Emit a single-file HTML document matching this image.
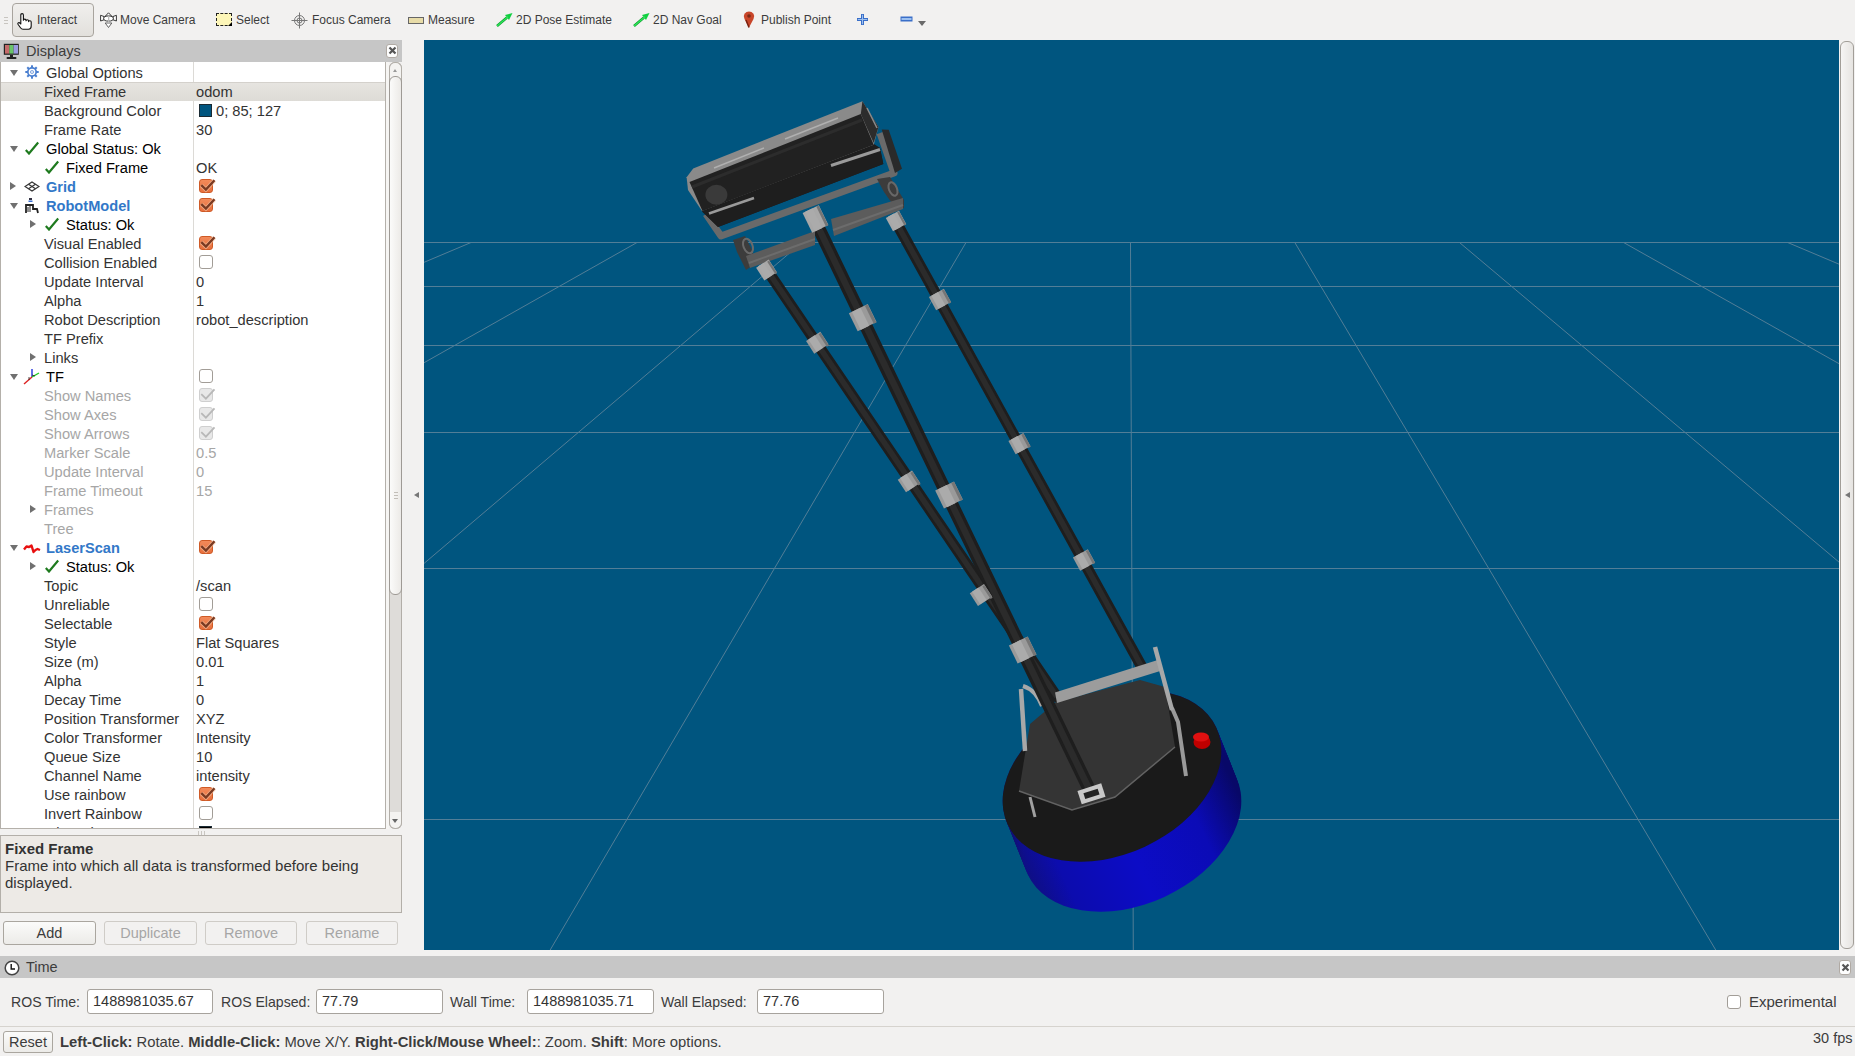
<!DOCTYPE html>
<html><head><meta charset="utf-8">
<style>
*{margin:0;padding:0;box-sizing:border-box}
html,body{width:1855px;height:1056px;overflow:hidden;background:#f2f1f0;font-family:"Liberation Sans",sans-serif;color:#3c3c3c}
.abs{position:absolute}
#tb{position:absolute;left:0;top:0;width:1855px;height:40px;background:#f2f1f0}
.tbt{position:absolute;top:12px;font-size:12px;line-height:16px;color:#3c3c3c;white-space:nowrap}
.tbi{position:absolute}
#interact{position:absolute;left:12px;top:3px;width:82px;height:34px;border:1px solid #a8a49e;border-radius:4px;background:linear-gradient(#f0efed,#e2e0dc)}
.hdr{position:absolute;background:#c6c6c6}
.hdrt{position:absolute;font-size:14.5px;line-height:18px;color:#3c3c3c}
.closebtn{position:absolute;width:12px;height:14px;border:1px solid #b0aaa4;border-radius:3px;background:#fdfdfd}
#tree{position:absolute;left:0;top:62px;width:386px;height:767px;background:#fff;overflow:hidden}
#treeb{position:absolute;left:0;top:62px;width:386px;height:767px;border:1px solid #b4b0aa;border-top:none}
#coldiv{position:absolute;left:193px;top:0;width:1px;height:767px;background:#dcdad6}
.row{position:absolute;left:0;width:385px;height:19px}
.row.sel{background:linear-gradient(#e6e4e0,#dddbd6);border-top:1px solid #d4d1cc}
.lbl{position:absolute;top:1px;font-size:14.67px;line-height:19px;white-space:nowrap}
.row.sel .lbl,.row.sel .val{top:0px}
.tn{color:#333}
.ts{color:#000}
.tb{color:#3278c8;font-weight:bold;font-size:14.6px}
.td{color:#a6a6a6}
.val{position:absolute;left:196px;top:1px;font-size:14.67px;line-height:19px;white-space:nowrap;color:#333}
.val.td{color:#a6a6a6}
.ic{position:absolute}
.tri{position:absolute;width:0;height:0}
.tri.down{top:7px;border-left:4px solid transparent;border-right:4px solid transparent;border-top:6px solid #707070}
.tri.right{top:5px;border-top:4px solid transparent;border-bottom:4px solid transparent;border-left:6px solid #707070}
.cb{position:absolute;left:199px;top:2px;width:14px;height:14px;border-radius:3px}
.cb svg{position:absolute;left:-1px;top:-3px}
.cb.on{background:linear-gradient(#f28a5a,#e8703e);border:1px solid #cf5a26}
.cb.off{background:#fff;border:1px solid #a29d97}
.cb.dis{background:#e8e8e8;border:1px solid #cfcfcf}
.sw{position:absolute;left:199px;top:3px;width:13px;height:13px;background:#00557f;border:1px solid #1a2a33}
.sw.blk{background:#000}
.btn{position:absolute;top:921px;height:24px;border:1px solid #aaa69f;border-radius:3px;background:linear-gradient(#fbfbfa,#ecebe8);font-size:14.5px;line-height:22px;text-align:center}
.btn.dis{color:#a6a6a6;border-color:#cfccc7;background:#f2f1f0}
.inp{position:absolute;top:989px;height:25px;background:#fff;border:1px solid #a7a39d;border-radius:3px;font-size:14.5px;line-height:23px;padding-left:5px;color:#333}
.tlab{position:absolute;top:993px;font-size:14.1px;line-height:18px;color:#3c3c3c;white-space:nowrap}
#status{position:absolute;left:60px;top:1033px;font-size:14.8px;line-height:18px;color:#3c3c3c;white-space:nowrap}
#status b{color:#3c3c3c}
</style></head><body>
<!-- toolbar -->
<div id="tb">
 <div class="abs" style="left:4px;top:17px;width:4px;height:1px;background:#c8c5c0"></div>
 <div class="abs" style="left:4px;top:20px;width:4px;height:1px;background:#c8c5c0"></div>
 <div class="abs" style="left:4px;top:23px;width:4px;height:1px;background:#c8c5c0"></div>
 <div id="interact"></div>
 <svg class="tbi" style="left:17px;top:13px" width="16" height="17" viewBox="0 0 16 17"><path d="M3.8,11 L3.8,2 Q3.8,0.6 5.1,0.6 Q6.4,0.6 6.4,2 L6.4,7.2 Q6.4,6.1 7.7,6.1 Q9,6.1 9,7.3 L9,7.8 Q9,6.8 10.3,6.8 Q11.6,6.8 11.6,8 L11.6,8.6 Q11.6,7.7 12.9,7.7 Q14.2,7.7 14.2,9 L14.2,13 Q14.2,16.2 11.5,16.2 L6,16.2 Q4.5,16.2 3.5,14.8 L1,11.2 Q0.5,10.2 1.4,9.8 Q2.4,9.4 3,10.3 Z" fill="#fff" stroke="#111" stroke-width="1.1" stroke-linejoin="round"/></svg>
 <div class="tbt" style="left:37px">Interact</div>
 <svg class="tbi" style="left:99.5px;top:12px" width="17" height="17" viewBox="0 0 17 17"><g fill="#fff" stroke="#222" stroke-width="0.9" stroke-linejoin="round"><path d="M8.5 0.8 L12 4.5 L5 4.5 Z"/><path d="M0.6 3.3 L4 4.5 L4 7.8 L0.6 9 Z"/><path d="M16.4 3.3 L13 4.5 L13 7.8 L16.4 9 Z"/><ellipse cx="8.5" cy="6.5" rx="4.8" ry="2.6"/><path d="M5.2 11 L11.8 11 L8.5 15.5 Z" stroke="#555"/></g><rect x="8" y="4" width="1.3" height="7" fill="#bbb"/></svg>
 <div class="tbt" style="left:120px">Move Camera</div>
 <div class="tbi" style="left:216px;top:13px;width:16px;height:13px;background:#fdf6b8;border:1px dashed #222"></div>
 <div class="tbi" style="left:228px;top:22px;width:0;height:0;border-left:4px solid transparent;border-bottom:4px solid #000"></div>
 <div class="tbt" style="left:236px">Select</div>
 <svg class="tbi" style="left:291px;top:12px" width="17" height="17" viewBox="0 0 17 17"><g fill="none" stroke="#777" stroke-width="1"><circle cx="8.5" cy="8.5" r="5"/><circle cx="8.5" cy="8.5" r="2.5"/><path d="M8.5 0.5 L8.5 16.5 M0.5 8.5 L16.5 8.5"/></g></svg>
 <div class="tbt" style="left:312px">Focus Camera</div>
 <div class="tbi" style="left:408px;top:17px;width:16px;height:7px;background:#e8dca8;border:1px solid #666"></div>
 <div class="tbt" style="left:428px">Measure</div>
 <svg class="tbi" style="left:496px;top:12px" width="17" height="15" viewBox="0 0 17 15"><path d="M1 14 L11 5.5" stroke="#0a9a2a" stroke-width="2.5"/><path d="M16.5 1 L9 3 L13 8 Z" fill="#10d040"/><path d="M1 14 L12 4.8" stroke="#2ee85a" stroke-width="1.2"/></svg>
 <div class="tbt" style="left:516px">2D Pose Estimate</div>
 <svg class="tbi" style="left:633px;top:12px" width="17" height="15" viewBox="0 0 17 15"><path d="M1 14 L11 5.5" stroke="#0a9a2a" stroke-width="2.5"/><path d="M16.5 1 L9 3 L13 8 Z" fill="#10d040"/><path d="M1 14 L12 4.8" stroke="#2ee85a" stroke-width="1.2"/></svg>
 <div class="tbt" style="left:653px">2D Nav Goal</div>
 <svg class="tbi" style="left:743px;top:11px" width="12" height="17" viewBox="0 0 12 17"><path d="M6 16.5 L1.5 8 Q0 5 1.5 2.8 Q3.3 0.5 6 0.5 Q8.7 0.5 10.5 2.8 Q12 5 10.5 8 Z" fill="#c8462a"/><path d="M6 16.5 L3 9" stroke="#7a2210" stroke-width="1.5"/><circle cx="6" cy="5" r="1.8" fill="#7a2a18"/></svg>
 <div class="tbt" style="left:761px">Publish Point</div>
 <svg class="tbi" style="left:856px;top:13px" width="13" height="13" viewBox="0 0 13 13"><path d="M6.5 1 L6.5 12 M1 6.5 L12 6.5" stroke="#3a6fc8" stroke-width="3"/><path d="M6.5 1.8 L6.5 11.2 M1.8 6.5 L11.2 6.5" stroke="#9cc0f0" stroke-width="1"/></svg>
 <svg class="tbi" style="left:900px;top:16px" width="13" height="6" viewBox="0 0 13 6"><rect x="0.5" y="0.5" width="12" height="5" fill="#3a6fc8"/><rect x="1.5" y="2" width="10" height="2" fill="#9cc0f0"/></svg>
 <div class="tbi" style="left:918px;top:21px;width:0;height:0;border-left:4px solid transparent;border-right:4px solid transparent;border-top:5px solid #6a6a6a"></div>
</div>

<!-- displays panel -->
<div class="hdr" style="left:0;top:40px;width:402px;height:22px"></div>
<svg class="abs" style="left:3px;top:43px" width="17" height="17" viewBox="0 0 17 17"><rect x="0.8" y="0.8" width="15" height="11" fill="#222"/><rect x="2" y="2" width="4.3" height="8.6" fill="#c46a6a"/><rect x="6.3" y="2" width="4.3" height="8.6" fill="#6ac46a"/><rect x="10.6" y="2" width="4.4" height="8.6" fill="#9a9ae0"/><rect x="7" y="12" width="3" height="2" fill="#222"/><rect x="3.5" y="14" width="10" height="2" rx="1" fill="#222"/></svg>
<div class="hdrt" style="left:26px;top:42px">Displays</div>
<div class="closebtn" style="left:386px;top:44px"></div>
<svg class="abs" style="left:388px;top:46px" width="9" height="9" viewBox="0 0 9 9"><path d="M1.5 1.5 L7.5 7.5 M7.5 1.5 L1.5 7.5" stroke="#555" stroke-width="2.2"/></svg>

<div id="tree">
 <div id="coldiv"></div>
<div class="row" style="top:1px"><div class="tri down" style="left:10px"></div><svg class="ic" style="left:25px;top:2px" width="14" height="14" viewBox="0 0 14 14"><g fill="#4a7fd0"><circle cx="7" cy="7" r="5"/><rect x="6" y="0.3" width="2" height="13.4"/><rect x="0.3" y="6" width="13.4" height="2"/><rect x="6" y="0.3" width="2" height="13.4" transform="rotate(45 7 7)"/><rect x="6" y="0.3" width="2" height="13.4" transform="rotate(-45 7 7)"/></g><circle cx="7" cy="7" r="3.3" fill="#fff"/><circle cx="7" cy="7" r="1.8" fill="#4a7fd0"/><circle cx="7" cy="7" r="1" fill="#fff"/></svg><span class="lbl tn" style="left:46px">Global Options</span></div>
<div class="row sel" style="top:20px"><span class="lbl tn" style="left:44px">Fixed Frame</span><span class="val">odom</span></div>
<div class="row" style="top:39px"><span class="lbl tn" style="left:44px">Background Color</span><div class="sw"></div><span class="val" style="left:216px">0; 85; 127</span></div>
<div class="row" style="top:58px"><span class="lbl tn" style="left:44px">Frame Rate</span><span class="val">30</span></div>
<div class="row" style="top:77px"><div class="tri down" style="left:10px"></div><svg class="ic" style="left:25px;top:2px" width="14" height="14" viewBox="0 0 14 14"><path d="M0.8 9 L4 12.5 L13.2 1.5" fill="none" stroke="#1e7a1e" stroke-width="2.2"/></svg><span class="lbl ts" style="left:46px">Global Status: Ok</span></div>
<div class="row" style="top:96px"><svg class="ic" style="left:45px;top:2px" width="14" height="14" viewBox="0 0 14 14"><path d="M0.8 9 L4 12.5 L13.2 1.5" fill="none" stroke="#1e7a1e" stroke-width="2.2"/></svg><span class="lbl ts" style="left:66px">Fixed Frame</span><span class="val">OK</span></div>
<div class="row" style="top:115px"><div class="tri right" style="left:10px"></div><svg class="ic" style="left:24px;top:4px" width="16" height="11" viewBox="0 0 16 11"><g fill="none" stroke="#333" stroke-width="1.2"><path d="M8 1 L15 5.5 L8 10 L1 5.5 Z"/><path d="M4.5 3.2 L11.5 7.8 M11.5 3.2 L4.5 7.8"/></g></svg><span class="lbl tb" style="left:46px">Grid</span><div class="cb on"><svg width="18" height="16" viewBox="0 0 18 16"><path d="M2.3 8.2 L6.9 12.6 L15.5 3.3" fill="none" stroke="#f7c4a4" stroke-width="4" opacity="0.7"/><path d="M2.3 8.2 L6.9 12.6 L15.5 3.3" fill="none" stroke="#7a3a22" stroke-width="2.4"/></svg></div></div>
<div class="row" style="top:134px"><div class="tri down" style="left:10px"></div><svg class="ic" style="left:24px;top:1px" width="16" height="17" viewBox="0 0 16 17"><rect x="5" y="1" width="3" height="2" fill="#334"/><rect x="4.5" y="3.5" width="4" height="1.5" fill="#3a6fd0"/><path d="M2 16 L2 8 L9 8 L9 12 L13 12 L14 16" fill="none" stroke="#222" stroke-width="1.8"/><path d="M4 10 L4 15 M6 9 L6 15" stroke="#222" stroke-width="1"/></svg><span class="lbl tb" style="left:46px">RobotModel</span><div class="cb on"><svg width="18" height="16" viewBox="0 0 18 16"><path d="M2.3 8.2 L6.9 12.6 L15.5 3.3" fill="none" stroke="#f7c4a4" stroke-width="4" opacity="0.7"/><path d="M2.3 8.2 L6.9 12.6 L15.5 3.3" fill="none" stroke="#7a3a22" stroke-width="2.4"/></svg></div></div>
<div class="row" style="top:153px"><div class="tri right" style="left:30px"></div><svg class="ic" style="left:45px;top:2px" width="14" height="14" viewBox="0 0 14 14"><path d="M0.8 9 L4 12.5 L13.2 1.5" fill="none" stroke="#1e7a1e" stroke-width="2.2"/></svg><span class="lbl ts" style="left:66px">Status: Ok</span></div>
<div class="row" style="top:172px"><span class="lbl tn" style="left:44px">Visual Enabled</span><div class="cb on"><svg width="18" height="16" viewBox="0 0 18 16"><path d="M2.3 8.2 L6.9 12.6 L15.5 3.3" fill="none" stroke="#f7c4a4" stroke-width="4" opacity="0.7"/><path d="M2.3 8.2 L6.9 12.6 L15.5 3.3" fill="none" stroke="#7a3a22" stroke-width="2.4"/></svg></div></div>
<div class="row" style="top:191px"><span class="lbl tn" style="left:44px">Collision Enabled</span><div class="cb off"></div></div>
<div class="row" style="top:210px"><span class="lbl tn" style="left:44px">Update Interval</span><span class="val">0</span></div>
<div class="row" style="top:229px"><span class="lbl tn" style="left:44px">Alpha</span><span class="val">1</span></div>
<div class="row" style="top:248px"><span class="lbl tn" style="left:44px">Robot Description</span><span class="val">robot_description</span></div>
<div class="row" style="top:267px"><span class="lbl tn" style="left:44px">TF Prefix</span><span class="val"></span></div>
<div class="row" style="top:286px"><div class="tri right" style="left:30px"></div><span class="lbl tn" style="left:44px">Links</span><span class="val"></span></div>
<div class="row" style="top:305px"><div class="tri down" style="left:10px"></div><svg class="ic" style="left:23px;top:1px" width="17" height="17" viewBox="0 0 17 17"><path d="M9 9 L9 1" stroke="#2233dd" stroke-width="1.4"/><path d="M9 9 L16 5" stroke="#22cc22" stroke-width="1.4"/><path d="M9 9 L1 16" stroke="#dd2222" stroke-width="1.4"/><path d="M6 12 L6 9 M9 7 L12 8" stroke="#222" stroke-width="0.8"/></svg><span class="lbl ts" style="left:46px">TF</span><div class="cb off"></div></div>
<div class="row" style="top:324px"><span class="lbl td" style="left:44px">Show Names</span><div class="cb dis"><svg width="18" height="16" viewBox="0 0 18 16"><path d="M2.3 8.2 L6.9 12.6 L15.5 3.3" fill="none" stroke="#b8b8b8" stroke-width="1.8"/></svg></div></div>
<div class="row" style="top:343px"><span class="lbl td" style="left:44px">Show Axes</span><div class="cb dis"><svg width="18" height="16" viewBox="0 0 18 16"><path d="M2.3 8.2 L6.9 12.6 L15.5 3.3" fill="none" stroke="#b8b8b8" stroke-width="1.8"/></svg></div></div>
<div class="row" style="top:362px"><span class="lbl td" style="left:44px">Show Arrows</span><div class="cb dis"><svg width="18" height="16" viewBox="0 0 18 16"><path d="M2.3 8.2 L6.9 12.6 L15.5 3.3" fill="none" stroke="#b8b8b8" stroke-width="1.8"/></svg></div></div>
<div class="row" style="top:381px"><span class="lbl td" style="left:44px">Marker Scale</span><span class="val td">0.5</span></div>
<div class="row" style="top:400px"><span class="lbl td" style="left:44px">Update Interval</span><span class="val td">0</span></div>
<div class="row" style="top:419px"><span class="lbl td" style="left:44px">Frame Timeout</span><span class="val td">15</span></div>
<div class="row" style="top:438px"><div class="tri right" style="left:30px"></div><span class="lbl td" style="left:44px">Frames</span><span class="val td"></span></div>
<div class="row" style="top:457px"><span class="lbl td" style="left:44px">Tree</span><span class="val td"></span></div>
<div class="row" style="top:476px"><div class="tri down" style="left:10px"></div><svg class="ic" style="left:23px;top:3px" width="18" height="14" viewBox="0 0 18 14"><path d="M1 8.5 L3.5 5.5 L6 6 L8.5 4.5 L10.5 11 L12.5 9 L14.5 8 L17 9" fill="none" stroke="#e81010" stroke-width="2.4" stroke-linejoin="round"/></svg><span class="lbl tb" style="left:46px">LaserScan</span><div class="cb on"><svg width="18" height="16" viewBox="0 0 18 16"><path d="M2.3 8.2 L6.9 12.6 L15.5 3.3" fill="none" stroke="#f7c4a4" stroke-width="4" opacity="0.7"/><path d="M2.3 8.2 L6.9 12.6 L15.5 3.3" fill="none" stroke="#7a3a22" stroke-width="2.4"/></svg></div></div>
<div class="row" style="top:495px"><div class="tri right" style="left:30px"></div><svg class="ic" style="left:45px;top:2px" width="14" height="14" viewBox="0 0 14 14"><path d="M0.8 9 L4 12.5 L13.2 1.5" fill="none" stroke="#1e7a1e" stroke-width="2.2"/></svg><span class="lbl ts" style="left:66px">Status: Ok</span></div>
<div class="row" style="top:514px"><span class="lbl tn" style="left:44px">Topic</span><span class="val">/scan</span></div>
<div class="row" style="top:533px"><span class="lbl tn" style="left:44px">Unreliable</span><div class="cb off"></div></div>
<div class="row" style="top:552px"><span class="lbl tn" style="left:44px">Selectable</span><div class="cb on"><svg width="18" height="16" viewBox="0 0 18 16"><path d="M2.3 8.2 L6.9 12.6 L15.5 3.3" fill="none" stroke="#f7c4a4" stroke-width="4" opacity="0.7"/><path d="M2.3 8.2 L6.9 12.6 L15.5 3.3" fill="none" stroke="#7a3a22" stroke-width="2.4"/></svg></div></div>
<div class="row" style="top:571px"><span class="lbl tn" style="left:44px">Style</span><span class="val">Flat Squares</span></div>
<div class="row" style="top:590px"><span class="lbl tn" style="left:44px">Size (m)</span><span class="val">0.01</span></div>
<div class="row" style="top:609px"><span class="lbl tn" style="left:44px">Alpha</span><span class="val">1</span></div>
<div class="row" style="top:628px"><span class="lbl tn" style="left:44px">Decay Time</span><span class="val">0</span></div>
<div class="row" style="top:647px"><span class="lbl tn" style="left:44px">Position Transformer</span><span class="val">XYZ</span></div>
<div class="row" style="top:666px"><span class="lbl tn" style="left:44px">Color Transformer</span><span class="val">Intensity</span></div>
<div class="row" style="top:685px"><span class="lbl tn" style="left:44px">Queue Size</span><span class="val">10</span></div>
<div class="row" style="top:704px"><span class="lbl tn" style="left:44px">Channel Name</span><span class="val">intensity</span></div>
<div class="row" style="top:723px"><span class="lbl tn" style="left:44px">Use rainbow</span><div class="cb on"><svg width="18" height="16" viewBox="0 0 18 16"><path d="M2.3 8.2 L6.9 12.6 L15.5 3.3" fill="none" stroke="#f7c4a4" stroke-width="4" opacity="0.7"/><path d="M2.3 8.2 L6.9 12.6 L15.5 3.3" fill="none" stroke="#7a3a22" stroke-width="2.4"/></svg></div></div>
<div class="row" style="top:742px"><span class="lbl tn" style="left:44px">Invert Rainbow</span><div class="cb off"></div></div>
<div class="row" style="top:761px"><span class="lbl tn" style="left:44px">Min Color</span><div class="sw blk"></div></div>
</div>
<div id="treeb"></div>
<!-- tree scrollbar -->
<div class="abs" style="left:386px;top:62px;width:3px;height:767px;background:#f6f5f3"></div>
<div class="abs" style="left:389px;top:62px;width:13px;height:767px;border:1px solid #b2aea8;border-radius:6px;background:#dedcd9"></div>
<div class="abs" style="left:389px;top:62px;width:13px;height:16px;border:1px solid #b2aea8;border-bottom:none;border-radius:6px 6px 0 0;background:#f4f3f1"></div>
<div class="abs" style="left:393px;top:69px;width:0;height:0;border-left:2.5px solid transparent;border-right:2.5px solid transparent;border-bottom:3px solid #999"></div>
<div class="abs" style="left:389px;top:76px;width:13px;height:519px;border:1px solid #9e9a95;border-radius:6px;background:linear-gradient(90deg,#fbfbfa,#eceae7)"></div>
<div class="abs" style="left:389px;top:812px;width:13px;height:17px;border:1px solid #b2aea8;border-top:none;border-radius:0 0 6px 6px;background:#f4f3f1"></div>
<div class="abs" style="left:392px;top:819px;width:0;height:0;border-left:3.5px solid transparent;border-right:3.5px solid transparent;border-top:4px solid #666"></div>
<div class="abs" style="left:198px;top:831px;width:1px;height:4px;background:#c9c6c1;box-shadow:3px 0 0 #c9c6c1,6px 0 0 #c9c6c1"></div>

<!-- description -->
<div class="abs" style="left:0;top:835px;width:402px;height:78px;background:#edeae6;border:1px solid #b3afa9"></div>
<div class="abs" style="left:5px;top:840px;font-size:15px;line-height:17px;color:#333;width:398px">
<b>Fixed Frame</b><br>Frame into which all data is transformed before being displayed.</div>

<div class="btn" style="left:3px;width:93px">Add</div>
<div class="btn dis" style="left:104px;width:93px">Duplicate</div>
<div class="btn dis" style="left:205px;width:92px">Remove</div>
<div class="btn dis" style="left:306px;width:92px">Rename</div>

<!-- splitter -->
<div class="abs" style="left:403px;top:40px;width:21px;height:910px;background:#f2f1f0"></div>
<div class="abs" style="left:394px;top:492px;width:4px;height:1px;background:#c2beb8;box-shadow:0 3px 0 #c2beb8,0 6px 0 #c2beb8"></div>
<div class="abs" style="left:414px;top:492px;width:0;height:0;border-top:3.5px solid transparent;border-bottom:3.5px solid transparent;border-right:5px solid #777"></div>

<!-- 3D view -->
<svg class="abs" style="left:424px;top:40px" width="1415" height="910" viewBox="424 40 1415 910">
<defs><linearGradient id="blu" x1="1000" y1="0" x2="1242" y2="0" gradientUnits="userSpaceOnUse"><stop offset="0" stop-color="#10106e"/><stop offset="0.2" stop-color="#0c0cae"/><stop offset="0.5" stop-color="#0c0cc6"/><stop offset="0.8" stop-color="#0b0bb6"/><stop offset="1" stop-color="#080868"/></linearGradient></defs>
<rect x="424" y="40" width="1415" height="910" fill="#00557f"/>
<line x1="424" y1="242.5" x2="1839" y2="242.5" stroke="#527e97" stroke-width="1" fill="none"/>
<line x1="424" y1="286.5" x2="1839" y2="286.5" stroke="#527e97" stroke-width="1" fill="none"/>
<line x1="424" y1="345.5" x2="1839" y2="345.5" stroke="#527e97" stroke-width="1" fill="none"/>
<line x1="424" y1="432.5" x2="1839" y2="432.5" stroke="#527e97" stroke-width="1" fill="none"/>
<line x1="424" y1="568.5" x2="1839" y2="568.5" stroke="#527e97" stroke-width="1" fill="none"/>
<line x1="424" y1="819.5" x2="1839" y2="819.5" stroke="#527e97" stroke-width="1" fill="none"/>
<line x1="471" y1="242.5" x2="-6634.0" y2="3242.5" stroke="#527e97" stroke-width="1" fill="none"/>
<line x1="637" y1="242.5" x2="-4676.7" y2="3242.5" stroke="#527e97" stroke-width="1" fill="none"/>
<line x1="802" y1="242.5" x2="-2731.1" y2="3242.5" stroke="#527e97" stroke-width="1" fill="none"/>
<line x1="966" y1="242.5" x2="-797.3" y2="3242.5" stroke="#527e97" stroke-width="1" fill="none"/>
<line x1="1130.5" y1="242.5" x2="1142.4" y2="3242.5" stroke="#527e97" stroke-width="1" fill="none"/>
<line x1="1294.8" y1="242.5" x2="3079.7" y2="3242.5" stroke="#527e97" stroke-width="1" fill="none"/>
<line x1="1459.5" y1="242.5" x2="5021.7" y2="3242.5" stroke="#527e97" stroke-width="1" fill="none"/>
<line x1="1623.6" y1="242.5" x2="6956.7" y2="3242.5" stroke="#527e97" stroke-width="1" fill="none"/>
<line x1="1787.7" y1="242.5" x2="8891.7" y2="3242.5" stroke="#527e97" stroke-width="1" fill="none"/>
<ellipse cx="1112.0" cy="776.0" rx="115" ry="78" transform="rotate(-25 1112.0 776.0)" fill="url(#blu)"/>
<ellipse cx="1113.0" cy="778.5" rx="115" ry="78" transform="rotate(-25 1113.0 778.5)" fill="url(#blu)"/>
<ellipse cx="1114.0" cy="781.0" rx="115" ry="78" transform="rotate(-25 1114.0 781.0)" fill="url(#blu)"/>
<ellipse cx="1115.0" cy="783.5" rx="115" ry="78" transform="rotate(-25 1115.0 783.5)" fill="url(#blu)"/>
<ellipse cx="1116.0" cy="786.0" rx="115" ry="78" transform="rotate(-25 1116.0 786.0)" fill="url(#blu)"/>
<ellipse cx="1117.0" cy="788.5" rx="115" ry="78" transform="rotate(-25 1117.0 788.5)" fill="url(#blu)"/>
<ellipse cx="1118.0" cy="791.0" rx="115" ry="78" transform="rotate(-25 1118.0 791.0)" fill="url(#blu)"/>
<ellipse cx="1119.0" cy="793.5" rx="115" ry="78" transform="rotate(-25 1119.0 793.5)" fill="url(#blu)"/>
<ellipse cx="1120.0" cy="796.0" rx="115" ry="78" transform="rotate(-25 1120.0 796.0)" fill="url(#blu)"/>
<ellipse cx="1121.0" cy="798.5" rx="115" ry="78" transform="rotate(-25 1121.0 798.5)" fill="url(#blu)"/>
<ellipse cx="1122.0" cy="801.0" rx="115" ry="78" transform="rotate(-25 1122.0 801.0)" fill="url(#blu)"/>
<ellipse cx="1123.0" cy="803.5" rx="115" ry="78" transform="rotate(-25 1123.0 803.5)" fill="url(#blu)"/>
<ellipse cx="1124.0" cy="806.0" rx="115" ry="78" transform="rotate(-25 1124.0 806.0)" fill="url(#blu)"/>
<ellipse cx="1125.0" cy="808.5" rx="115" ry="78" transform="rotate(-25 1125.0 808.5)" fill="url(#blu)"/>
<ellipse cx="1126.0" cy="811.0" rx="115" ry="78" transform="rotate(-25 1126.0 811.0)" fill="url(#blu)"/>
<ellipse cx="1127.0" cy="813.5" rx="115" ry="78" transform="rotate(-25 1127.0 813.5)" fill="url(#blu)"/>
<ellipse cx="1128.0" cy="816.0" rx="115" ry="78" transform="rotate(-25 1128.0 816.0)" fill="url(#blu)"/>
<ellipse cx="1129.0" cy="818.5" rx="115" ry="78" transform="rotate(-25 1129.0 818.5)" fill="url(#blu)"/>
<ellipse cx="1130.0" cy="821.0" rx="115" ry="78" transform="rotate(-25 1130.0 821.0)" fill="url(#blu)"/>
<ellipse cx="1131.0" cy="823.5" rx="115" ry="78" transform="rotate(-25 1131.0 823.5)" fill="url(#blu)"/>
<ellipse cx="1132.0" cy="826.0" rx="115" ry="78" transform="rotate(-25 1132.0 826.0)" fill="url(#blu)"/>
<ellipse cx="1112" cy="776" rx="115" ry="78" transform="rotate(-25 1112 776)" fill="#1a1a1a"/>
<ellipse cx="1202" cy="742" rx="8.5" ry="7" fill="#c00000"/><ellipse cx="1201" cy="737" rx="8" ry="4.5" fill="#e01010"/>
<polyline points="1172,708 1178,722 1186,776" fill="none" stroke="#9a9a9a" stroke-width="4"/>
<line x1="896" y1="222" x2="1143" y2="669" stroke="#1e1e1e" stroke-width="11" stroke-linecap="round"/><line x1="896" y1="222" x2="1143" y2="669" stroke="#2b2b2b" stroke-width="5.5"/>
<line x1="767" y1="270" x2="1057" y2="697" stroke="#1e1e1e" stroke-width="11" stroke-linecap="round"/><line x1="767" y1="270" x2="1057" y2="697" stroke="#2b2b2b" stroke-width="5.5"/>
<polygon points="1030,724 1056,702 1140,680 1165,687 1175,747 1115,797 1072,810 1019,791" fill="#343434"/>
<polyline points="1175,747 1115,797 1072,810 1019,791" fill="none" stroke="#626262" stroke-width="1.5"/>
<polygon points="1055,692.5 1157,660.3 1161,670.7 1057,703" fill="#9c9c9c"/>
<polyline points="1021,689 1025,751" fill="none" stroke="#a8a8a8" stroke-width="4.5"/>
<path d="M1023,686 Q1036,690 1042,706" fill="none" stroke="#a8a8a8" stroke-width="4"/>
<polyline points="1155,647 1172,710" fill="none" stroke="#a8a8a8" stroke-width="4.5"/>
<polyline points="1030,797 1035,817" fill="none" stroke="#a0a0a0" stroke-width="3"/>
<line x1="815.7" y1="222" x2="1091" y2="793" stroke="#1e1e1e" stroke-width="13" stroke-linecap="round"/><line x1="815.7" y1="222" x2="1091" y2="793" stroke="#2b2b2b" stroke-width="6.5"/>
<rect x="1079" y="787" width="25" height="14" fill="#c8c8c8" transform="rotate(-18 1091 794)"/><rect x="1084" y="791" width="15" height="6" fill="#222" transform="rotate(-18 1091 794)"/>
<line x1="813.2" y1="336.4" x2="821.4" y2="349.0" stroke="#9a9a9a" stroke-width="17"/><line x1="813.2" y1="336.4" x2="821.4" y2="349.0" stroke="#ababab" stroke-width="7.7" transform="translate(-1.7,0.9)"/><line x1="813.2" y1="336.4" x2="821.4" y2="349.0" stroke="#767676" stroke-width="2.5" transform="translate(6.5,-2.9)"/>
<line x1="904.9" y1="475.1" x2="913.1" y2="487.7" stroke="#9a9a9a" stroke-width="17"/><line x1="904.9" y1="475.1" x2="913.1" y2="487.7" stroke="#ababab" stroke-width="7.7" transform="translate(-1.7,0.9)"/><line x1="904.9" y1="475.1" x2="913.1" y2="487.7" stroke="#767676" stroke-width="2.5" transform="translate(6.5,-2.9)"/>
<line x1="976.9" y1="588.7" x2="985.1" y2="601.3" stroke="#9a9a9a" stroke-width="17"/><line x1="976.9" y1="588.7" x2="985.1" y2="601.3" stroke="#ababab" stroke-width="7.7" transform="translate(-1.7,0.9)"/><line x1="976.9" y1="588.7" x2="985.1" y2="601.3" stroke="#767676" stroke-width="2.5" transform="translate(6.5,-2.9)"/>
<line x1="858.3" y1="308.7" x2="867.1" y2="326.7" stroke="#9a9a9a" stroke-width="21"/><line x1="858.3" y1="308.7" x2="867.1" y2="326.7" stroke="#ababab" stroke-width="9.5" transform="translate(-2.1,1.1)"/><line x1="858.3" y1="308.7" x2="867.1" y2="326.7" stroke="#767676" stroke-width="3.1" transform="translate(8.0,-3.6)"/>
<line x1="944.6" y1="486.0" x2="953.4" y2="504.0" stroke="#9a9a9a" stroke-width="21"/><line x1="944.6" y1="486.0" x2="953.4" y2="504.0" stroke="#ababab" stroke-width="9.5" transform="translate(-2.1,1.1)"/><line x1="944.6" y1="486.0" x2="953.4" y2="504.0" stroke="#767676" stroke-width="3.1" transform="translate(8.0,-3.6)"/>
<line x1="1018.3" y1="641.0" x2="1027.1" y2="659.0" stroke="#9a9a9a" stroke-width="21"/><line x1="1018.3" y1="641.0" x2="1027.1" y2="659.0" stroke="#ababab" stroke-width="9.5" transform="translate(-2.1,1.1)"/><line x1="1018.3" y1="641.0" x2="1027.1" y2="659.0" stroke="#767676" stroke-width="3.1" transform="translate(8.0,-3.6)"/>
<line x1="936.4" y1="292.9" x2="943.6" y2="306.1" stroke="#9a9a9a" stroke-width="17"/><line x1="936.4" y1="292.9" x2="943.6" y2="306.1" stroke="#ababab" stroke-width="7.7" transform="translate(-1.7,0.9)"/><line x1="936.4" y1="292.9" x2="943.6" y2="306.1" stroke="#767676" stroke-width="2.5" transform="translate(6.5,-2.9)"/>
<line x1="1015.9" y1="437.0" x2="1023.1" y2="450.2" stroke="#9a9a9a" stroke-width="17"/><line x1="1015.9" y1="437.0" x2="1023.1" y2="450.2" stroke="#ababab" stroke-width="7.7" transform="translate(-1.7,0.9)"/><line x1="1015.9" y1="437.0" x2="1023.1" y2="450.2" stroke="#767676" stroke-width="2.5" transform="translate(6.5,-2.9)"/>
<line x1="1080.4" y1="553.4" x2="1087.6" y2="566.6" stroke="#9a9a9a" stroke-width="17"/><line x1="1080.4" y1="553.4" x2="1087.6" y2="566.6" stroke="#ababab" stroke-width="7.7" transform="translate(-1.7,0.9)"/><line x1="1080.4" y1="553.4" x2="1087.6" y2="566.6" stroke="#767676" stroke-width="2.5" transform="translate(6.5,-2.9)"/>
<polyline points="706,214 721,236 894,173 880,133" fill="none" stroke="#6a6a6a" stroke-width="7" stroke-linejoin="round"/>
<polygon points="733,240 745,236 753,252 752,266 746,270 737,252" fill="#3c3c3c"/>
<ellipse cx="748" cy="246" rx="4.5" ry="7.5" fill="none" stroke="#6a6a6a" stroke-width="2" transform="rotate(-22 748 246)"/>
<polygon points="877,179 890,177 904,200 904,208 896,209 884,192" fill="#3c3c3c"/>
<ellipse cx="893" cy="189" rx="4" ry="7" fill="none" stroke="#686868" stroke-width="2" transform="rotate(-22 893 189)"/>
<polygon points="746,256 815,231 815,245 750,268" fill="#5c5c5c"/>
<polygon points="831,219 903,198 903,209 834,236" fill="#5c5c5c"/>
<line x1="749" y1="263" x2="815" y2="239" stroke="#6c6c6c" stroke-width="2"/>
<line x1="833" y1="230" x2="903" y2="205" stroke="#6c6c6c" stroke-width="2"/>
<line x1="762.4" y1="263.7" x2="770.6" y2="276.3" stroke="#a8a8a8" stroke-width="15"/><line x1="762.4" y1="263.7" x2="770.6" y2="276.3" stroke="#ababab" stroke-width="6.8" transform="translate(-1.5,0.8)"/><line x1="762.4" y1="263.7" x2="770.6" y2="276.3" stroke="#767676" stroke-width="2.2" transform="translate(5.7,-2.6)"/>
<line x1="810.7" y1="209.1" x2="820.3" y2="228.9" stroke="#a8a8a8" stroke-width="18"/><line x1="810.7" y1="209.1" x2="820.3" y2="228.9" stroke="#ababab" stroke-width="8.1" transform="translate(-1.8,0.9)"/><line x1="810.7" y1="209.1" x2="820.3" y2="228.9" stroke="#767676" stroke-width="2.7" transform="translate(6.8,-3.1)"/>
<line x1="892.4" y1="214.4" x2="899.6" y2="227.6" stroke="#a8a8a8" stroke-width="15"/><line x1="892.4" y1="214.4" x2="899.6" y2="227.6" stroke="#ababab" stroke-width="6.8" transform="translate(-1.5,0.8)"/><line x1="892.4" y1="214.4" x2="899.6" y2="227.6" stroke="#767676" stroke-width="2.2" transform="translate(5.7,-2.6)"/>
<polygon points="881.7,129.4 888.7,129.8 902,168.8 895,173" fill="#2a2a2a"/>
<polygon points="689.5,182 860.8,114.1 874,144 880,148 883.3,164 718,227 702,211" fill="#1e1e1e"/>
<polygon points="702,211.5 874,145 880,148 883.3,164 718,227" fill="#1e1e1e"/>
<line x1="709" y1="213.5" x2="754" y2="198" stroke="#9a9a9a" stroke-width="2.5"/>
<line x1="831" y1="165.5" x2="880" y2="149.5" stroke="#9a9a9a" stroke-width="3"/>
<polygon points="686.6,177.2 693.2,168.4 862.4,101.3 878.5,127 873.7,144.7 702,211 688,190" fill="#8a8a8a"/>
<polygon points="689.5,182 860.8,114.1 873.7,144.7 702.5,211" fill="#212121"/>
<line x1="692" y1="187" x2="862" y2="120" stroke="#2c2c2c" stroke-width="3"/>
<polygon points="862.4,101.3 878.5,127 873.7,143.1 860.8,114.1" fill="#2c2c2c"/>
<line x1="867" y1="108" x2="877" y2="128" stroke="#8a8a8a" stroke-width="1.5"/>
<line x1="714" y1="168" x2="764" y2="148" stroke="#b0b0b0" stroke-width="1.5"/>
<line x1="785" y1="139" x2="838" y2="118" stroke="#b0b0b0" stroke-width="1.5"/>
<ellipse cx="716.4" cy="194.8" rx="11" ry="10" fill="#3a3a3a"/>
</svg>

<!-- right strip -->
<div class="abs" style="left:1840px;top:41px;width:14px;height:908px;border:1px solid #a29e98;border-radius:6px;background:linear-gradient(90deg,#f6f5f4,#e6e4e1)"></div>
<div class="abs" style="left:1845px;top:492px;width:0;height:0;border-top:3.5px solid transparent;border-bottom:3.5px solid transparent;border-right:5px solid #777"></div>

<!-- time panel -->
<div class="hdr" style="left:0;top:956px;width:1855px;height:22px"></div>
<svg class="abs" style="left:4px;top:960px" width="16" height="16" viewBox="0 0 16 16"><circle cx="8" cy="8" r="6.8" fill="#fff" stroke="#444" stroke-width="1.5"/><path d="M7.2 4 L7.2 9 L11 9" fill="none" stroke="#111" stroke-width="1.4"/></svg>
<div class="hdrt" style="left:26px;top:958px">Time</div>
<div class="closebtn" style="left:1839px;top:960px;width:12px;height:15px"></div>
<svg class="abs" style="left:1841px;top:963px" width="9" height="9" viewBox="0 0 9 9"><path d="M1.5 1.5 L7.5 7.5 M7.5 1.5 L1.5 7.5" stroke="#555" stroke-width="2.2"/></svg>

<div class="tlab" style="left:11px">ROS Time:</div>
<div class="inp" style="left:87px;width:126px">1488981035.67</div>
<div class="tlab" style="left:221px">ROS Elapsed:</div>
<div class="inp" style="left:316px;width:127px">77.79</div>
<div class="tlab" style="left:450px">Wall Time:</div>
<div class="inp" style="left:527px;width:127px">1488981035.71</div>
<div class="tlab" style="left:661px">Wall Elapsed:</div>
<div class="inp" style="left:757px;width:127px">77.76</div>
<div class="abs" style="left:1727px;top:995px;width:14px;height:14px;background:#fff;border:1px solid #a29d97;border-radius:3px"></div>
<div class="tlab" style="left:1749px;font-size:15px">Experimental</div>

<div class="abs" style="left:0;top:1026px;width:1855px;height:1px;background:#d6d3ce"></div>
<div class="btn" style="left:3px;top:1031px;width:50px;height:22px;line-height:20px">Reset</div>
<div id="status"><b>Left-Click:</b> Rotate. <b>Middle-Click:</b> Move X/Y. <b>Right-Click/Mouse Wheel:</b>: Zoom. <b>Shift</b>: More options.</div>
<div class="abs" style="left:1813px;top:1029px;font-size:14.5px;line-height:18px;color:#3c3c3c">30 fps</div>
</body></html>
